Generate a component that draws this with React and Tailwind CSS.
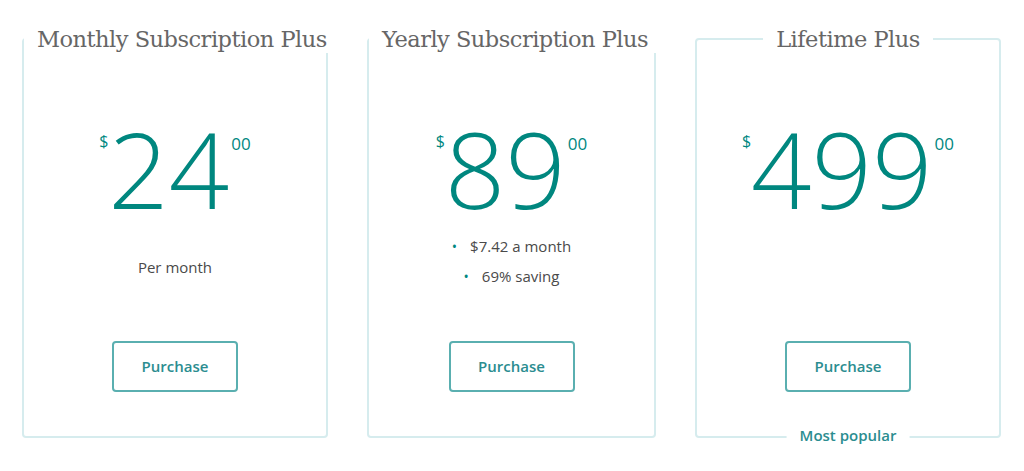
import { Fragment } from 'react';

const plans = [
  { title: 'Monthly Subscription Plus', price: '24', width: 'w-[306px]', notes: ['Per month'] },
  { title: 'Yearly Subscription Plus', price: '89', width: 'w-[289px]', bullets: ['$7.42 a month', '69% saving'] },
  { title: 'Lifetime Plus', price: '499', width: 'w-[306px]', popular: true },
];

const PlanCard = ({ plan }) => (
  <fieldset
    className={`relative ${plan.width} min-w-0 h-[413px] shrink-0 rounded-[4px] border-2 border-[#d6ecee] flex flex-col items-center`}
  >
    <legend className="mx-auto px-[13px] whitespace-nowrap text-[22.5px] leading-[28px] text-[#666666] font-['DejaVu_Serif',serif] tracking-[-0.5px]">
      {plan.title}
    </legend>

    {/* Price */}
    <div className="mt-[62px] flex items-start text-[#00877f] font-['Open_Sans',sans-serif]">
      <span className="mt-[18px] text-[16px] leading-none font-medium">$</span>
      <span className="text-[106px] leading-none font-light">{plan.price}</span>
      <span className="mt-[20px] ml-[2px] text-[17px] leading-none">00</span>
    </div>

    {/* Details */}
    <div className="mt-[10px] h-[82px] font-['Open_Sans',sans-serif] text-[15px] text-[#4a4a4a]">
      {plan.notes && plan.notes.map((n) => (
        <p key={n} className="mt-[25px] font-medium text-center">{n}</p>
      ))}
      {plan.bullets && (
        <ul className="flex flex-col items-center">
          {plan.bullets.map((b) => (
            <li key={b} className="h-[30px] flex items-center font-medium">
              <span className="mr-[13px] text-[#00877f] text-[14px]">•</span>
              {b}
            </li>
          ))}
        </ul>
      )}
    </div>

    <button className="mt-auto mb-[44px] w-[126px] h-[51px] rounded-[4px] border-2 border-[#5aafb0] bg-white font-['Open_Sans',sans-serif] text-[15px] font-semibold text-[#2b8d90]">
      Purchase
    </button>

    {plan.popular && (
      <span className="absolute left-1/2 -translate-x-1/2 bottom-[-10px] bg-white px-[13px] font-['Open_Sans',sans-serif] text-[15px] leading-[22px] font-semibold text-[#2b8d90] whitespace-nowrap">
        Most popular
      </span>
    )}
  </fieldset>
);

export default function App() {
  return (
    <div className="w-[1024px] h-[471px] bg-white pl-[22px] pt-[25px] flex gap-[39px]">
      {plans.map((p) => (
        <Fragment key={p.title}>
          <PlanCard plan={p} />
        </Fragment>
      ))}
    </div>
  );
}
